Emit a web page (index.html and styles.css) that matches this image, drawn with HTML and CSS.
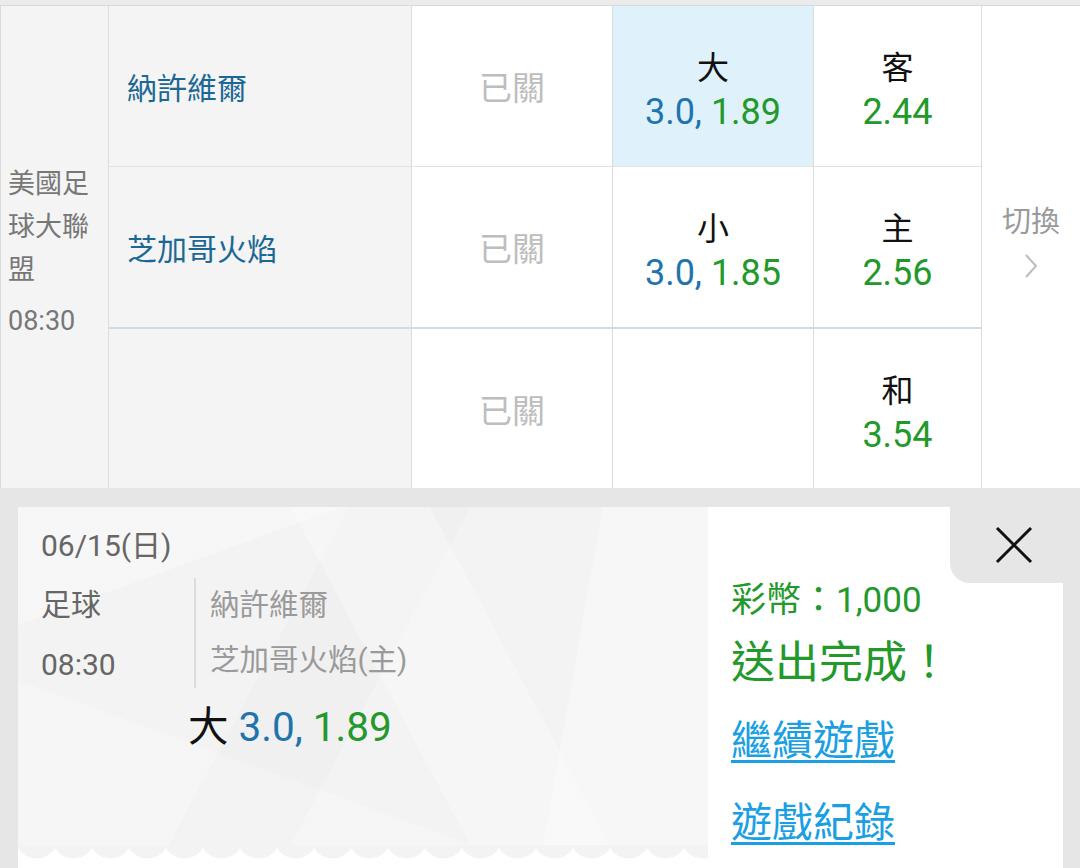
FILE: index.html
```html
<!DOCTYPE html>
<html lang="zh-Hant">
<head>
  <meta charset="UTF-8" />
  <meta name="viewport" content="width=device-width, initial-scale=1" />
  <title>投注完成</title>
  <link rel="stylesheet" href="styles.css">
</head>
<body>
  <div class="topbar"></div>

  <div class="board">
    <div class="league">
      <div class="league-name">美國足球大聯盟</div>
      <div class="league-time">08:30</div>
    </div>

    <!-- 第一列 -->
    <div class="cell team">納許維爾</div>
    <div class="cell closed">已關</div>
    <div class="cell odd picked">
      <span class="pick">大</span>
      <span class="price"><span class="line">3.0,</span> 1.89</span>
    </div>
    <div class="cell odd">
      <span class="pick">客</span>
      <span class="price">2.44</span>
    </div>

    <div class="switch">
      <span>切換</span>
      <svg class="chev" width="14" height="26" viewBox="0 0 14 26">
        <polyline points="2,2 12,13 2,24" fill="none" stroke="#bdbdbd" stroke-width="2" />
      </svg>
    </div>

    <!-- 第二列 -->
    <div class="cell team split">芝加哥火焰</div>
    <div class="cell closed split">已關</div>
    <div class="cell odd split">
      <span class="pick">小</span>
      <span class="price"><span class="line">3.0,</span> 1.85</span>
    </div>
    <div class="cell odd split">
      <span class="pick">主</span>
      <span class="price">2.56</span>
    </div>

    <!-- 第三列 -->
    <div class="cell team last"></div>
    <div class="cell closed last">已關</div>
    <div class="cell odd last"></div>
    <div class="cell odd last">
      <span class="pick">和</span>
      <span class="price">3.54</span>
    </div>
  </div>

  <div class="ticket-area">
    <div class="ticket">
      <div class="slip">
        <div class="slip-body">
          <div class="slip-date">06/15(日)</div>
          <div class="slip-info">
            <div class="slip-meta">
              <div>足球</div>
              <div>08:30</div>
            </div>
            <div class="slip-teams">
              <div>納許維爾</div>
              <div>芝加哥火焰(主)</div>
            </div>
          </div>
          <div class="slip-pick">大 <span class="line">3.0,</span> <span class="rate">1.89</span></div>
        </div>
        <div class="slip-edge"></div>
      </div>

      <div class="result">
        <div class="close-tab">
          <svg width="38" height="38" viewBox="0 0 38 38">
            <path d="M2 2 L36 36 M36 2 L2 36" stroke="#111" stroke-width="3" fill="none" />
          </svg>
        </div>
        <div class="coins">彩幣：1,000</div>
        <div class="done">送出完成！</div>
        <a class="link first" href="#">繼續遊戲</a>
        <a class="link" href="#">遊戲紀錄</a>
      </div>
    </div>
  </div>
</body>
</html>
```

FILE: styles.css
```css
body {
  margin: 0;
  font-family: Roboto, "Noto Sans CJK TC", sans-serif;
  background-color: #fff;
  overflow: hidden;
}

.topbar {
  height: 5px;
  background-color: #ebebeb;
}

/* 賠率表 */
.board {
  display: grid;
  grid-template-columns: 108px 303px 201px 201px 168px 1fr;
  grid-template-rows: 161px 162px 159px;
  border-top: 1px solid #d9d9d9;
}

.league {
  grid-column: 1;
  grid-row: 1 / span 3;
  background-color: #f4f4f4;
  border-left: 1px solid #dcdcdc;
  padding: 12px 10px 0 7px;
  display: flex;
  flex-direction: column;
  justify-content: center;
  color: #777;
  font-size: 27px;
  line-height: 43px;
}

.league-time {
  margin-top: 8px;
}

.cell {
  box-sizing: border-box;
  border-left: 1px solid #dcdcdc;
  border-bottom: 1px solid #e2e2e2;
  display: flex;
  flex-direction: column;
  align-items: center;
  justify-content: center;
  background-color: #fff;
}

.cell.split {
  border-bottom: 2px solid #cfdce7;
}

.cell.last {
  border-bottom: none;
}

.team {
  align-items: flex-start;
  padding-left: 18px;
  background-color: #f4f4f4;
  color: #1c6895;
  font-size: 30px;
}

.closed {
  color: #bdbdbd;
  font-size: 33px;
}

.odd {
  padding-top: 8px;
  line-height: 44px;
}

.odd.picked {
  background-color: #dff2fc;
}

.pick {
  font-size: 32px;
  color: #111;
}

.price {
  font-size: 36px;
  color: #22992a;
}

.line {
  color: #1f74ae;
}

.switch {
  grid-column: 6;
  grid-row: 1 / span 3;
  border-left: 1px solid #dcdcdc;
  display: flex;
  flex-direction: column;
  align-items: center;
  justify-content: center;
  padding-bottom: 18px;
  color: #9a9a9a;
  font-size: 29px;
}

.chev {
  margin-top: 13px;
}

/* 下方注單 */
.ticket-area {
  height: 380px;
  background-color: #e6e6e6;
  padding: 19px 17px 0 18px;
  box-sizing: border-box;
}

.ticket {
  display: flex;
  height: 361px;
}

.slip {
  width: 690px;
  display: flex;
  flex-direction: column;
  background-color: #fff;
}

.slip-body {
  flex: 1;
  padding: 19px 0 0 23px;
  background-color: #f3f3f3;
  background-image:
    linear-gradient(160deg, rgba(255, 255, 255, 0.3) 0 20%, transparent 20%),
    linear-gradient(62deg, transparent 0 52%, rgba(255, 255, 255, 0.25) 52% 68%, transparent 68%),
    linear-gradient(118deg, transparent 0 38%, rgba(0, 0, 0, 0.012) 38% 52%, transparent 52%),
    linear-gradient(20deg, rgba(255, 255, 255, 0.22) 0 28%, transparent 28%),
    linear-gradient(100deg, transparent 0 78%, rgba(255, 255, 255, 0.3) 78%);
}

.slip-edge {
  height: 14px;
  background-color: #fff;
  background-image: radial-gradient(circle at 50% -8px, #f3f3f3 21px, transparent 22px);
  background-size: 37px 14px;
  background-repeat: repeat-x;
  margin-bottom: 9px;
}

.slip-date {
  font-size: 30px;
  line-height: 40px;
  color: #666;
}

.slip-info {
  display: flex;
  align-items: flex-start;
}

.slip-meta {
  width: 153px;
  margin-top: 9px;
  font-size: 30px;
  line-height: 60px;
  color: #666;
}

.slip-teams {
  margin-top: 12px;
  border-left: 2px solid #dcdcdc;
  padding-left: 14px;
  font-size: 29.5px;
  line-height: 55px;
  color: #9a9a9a;
}

.slip-pick {
  margin: 10px 0 0 147px;
  font-size: 40.5px;
  line-height: 44px;
  color: #111;
}

.rate {
  color: #22992a;
}

.result {
  flex: 1;
  position: relative;
  background-color: #fff;
  padding: 72px 0 0 23px;
  display: flex;
  flex-direction: column;
  align-items: flex-start;
}

.close-tab {
  position: absolute;
  top: 0;
  right: 0;
  width: 113px;
  height: 76px;
  background-color: #e6e6e6;
  border-bottom-left-radius: 20px;
  display: flex;
  align-items: center;
  padding-left: 45px;
  box-sizing: border-box;
}

.coins {
  font-size: 35px;
  line-height: 44px;
  color: #22992a;
}

.done {
  margin-top: 10px;
  font-size: 44px;
  line-height: 60px;
  color: #22992a;
}

.link {
  font-size: 41px;
  line-height: 56px;
  color: #1a9fe3;
  text-decoration: underline;
  text-decoration-thickness: 3px;
  text-underline-offset: 5px;
  margin-top: 26px;
}

.link.first {
  margin-top: 20px;
}
```
